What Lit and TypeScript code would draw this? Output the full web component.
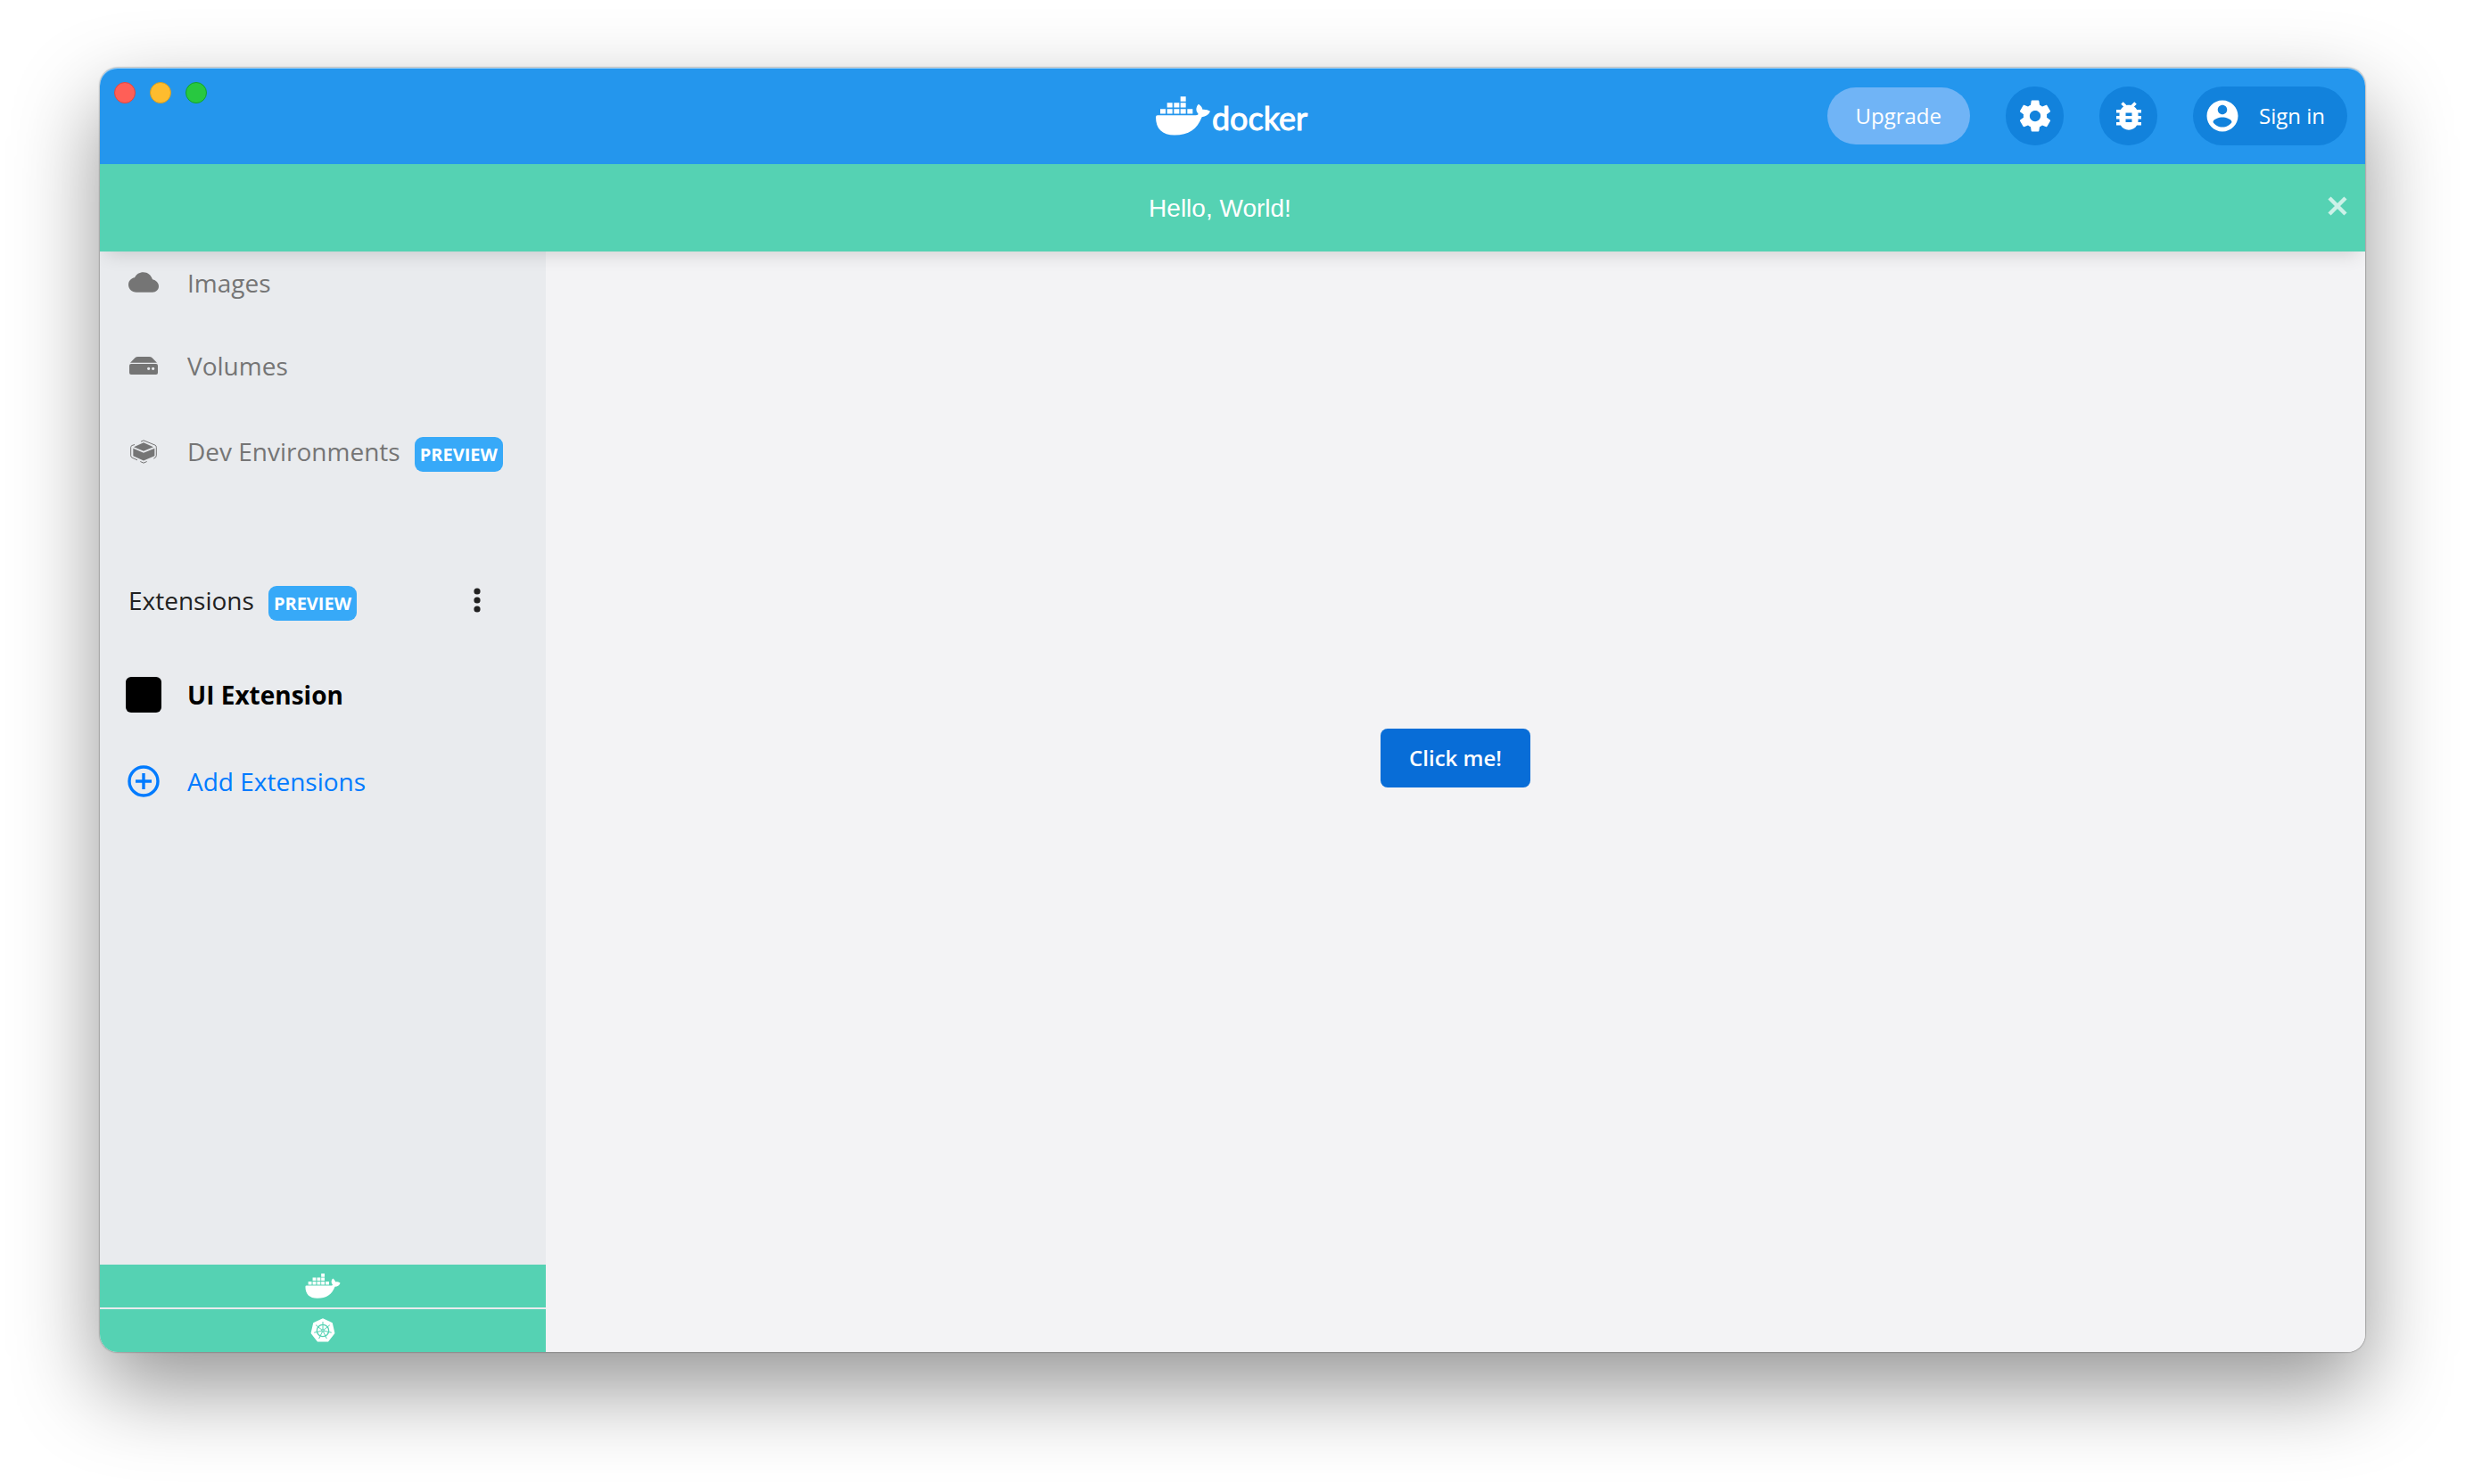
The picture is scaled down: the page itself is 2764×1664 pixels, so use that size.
import { LitElement, html, svg, css } from "lit";
import { customElement, property } from "lit/decorators.js";

const whale = svg`
  <path d="M162 52h18v17h-18zM117 73h18v16h-18zM140 73h18v16h-18zM162 73h18v16h-18zM94 94h18v16h-18zM117 94h18v16h-18zM140 94h18v16h-18zM162 94h18v16h-18zM185 94h18v16h-18z"/>
  <path d="M79 121Q79 115 85 115H213C221 115 224 112 220 108C213 100 214 86 223 78C231 84 236 90 236 96C244 95 255 97 262 102C257 114 247 120 234 121C218 162 190 182 142 182C100 182 79 160 79 121Z"/>`;

const point = (radius: number, turn: number) => {
  const angle = (turn / 7) * Math.PI * 2 - Math.PI / 2;
  return `${(radius * Math.cos(angle)).toFixed(2)} ${(radius * Math.sin(angle)).toFixed(2)}`;
};
const sevenths = [0, 1, 2, 3, 4, 5, 6];
const heptagon = "M" + sevenths.map((n) => point(37, n)).join("L") + "Z";
const spokes = sevenths.map((n) => `M0 0L${point(30, n)}`).join("");

const icons = {
  whale: { box: "79 52 183 131", art: whale },
  helm: {
    box: "-42 -42 84 84",
    art: svg`
      <path d=${heptagon} stroke="currentColor" stroke-width="8" stroke-linejoin="round"/>
      <g fill="none" stroke="var(--green)">
        <circle r="20" stroke-width="4"/>
        <path d=${spokes} stroke-width="3"/>
      </g>
      <circle r="5" fill="var(--green)"/>
      <circle r="2"/>`,
  },
  gear: {
    box: "0 0 24 24",
    art: svg`<path d="M19.43 12.98c.04-.32.07-.64.07-.98s-.03-.66-.07-.98l2.11-1.65c.19-.15.24-.42.12-.64l-2-3.46c-.12-.22-.39-.3-.61-.22l-2.49 1c-.52-.4-1.08-.73-1.69-.98l-.38-2.65C14.46 2.18 14.25 2 14 2h-4c-.25 0-.46.18-.49.42l-.38 2.65c-.61.25-1.17.59-1.69.98l-2.49-1c-.23-.09-.49 0-.61.22l-2 3.46c-.13.22-.07.49.12.64l2.11 1.65c-.04.32-.07.65-.07.98s.03.66.07.98l-2.11 1.65c-.19.15-.24.42-.12.64l2 3.46c.12.22.39.3.61.22l2.49-1c.52.4 1.08.73 1.69.98l.38 2.65c.03.24.24.42.49.42h4c.25 0 .46-.18.49-.42l.38-2.65c.61-.25 1.17-.59 1.69-.98l2.49 1c.23.09.49 0 .61-.22l2-3.46c.12-.22.07-.49-.12-.64l-2.11-1.65zM12 15.5c-1.93 0-3.5-1.57-3.5-3.5s1.57-3.5 3.5-3.5 3.5 1.57 3.5 3.5-1.57 3.5-3.5 3.5z"/>`,
  },
  bug: {
    box: "0 0 24 24",
    art: svg`<path d="M20 8h-2.81c-.45-.78-1.07-1.45-1.82-1.96L17 4.41 15.59 3l-2.17 2.17C12.96 5.06 12.49 5 12 5s-.96.06-1.41.17L8.41 3 7 4.41l1.62 1.63C7.88 6.55 7.26 7.22 6.81 8H4v2h2.09c-.05.33-.09.66-.09 1v1H4v2h2v1c0 .34.04.67.09 1H4v2h2.81c1.04 1.79 2.97 3 5.19 3s4.15-1.21 5.19-3H20v-2h-2.09c.05-.33.09-.66.09-1v-1h2v-2h-2v-1c0-.34-.04-.67-.09-1H20V8zm-6 8h-4v-2h4v2zm0-4h-4v-2h4v2z"/>`,
  },
  account: {
    box: "0 0 24 24",
    art: svg`<path d="M12 2C6.48 2 2 6.48 2 12s4.48 10 10 10 10-4.48 10-10S17.52 2 12 2zm0 3c1.66 0 3 1.34 3 3s-1.34 3-3 3-3-1.34-3-3 1.34-3 3-3zm0 14.2c-2.5 0-4.71-1.28-6-3.22.03-1.99 4-3.08 6-3.08 1.99 0 5.97 1.09 6 3.08-1.29 1.94-3.5 3.22-6 3.22z"/>`,
  },
  close: {
    box: "0 0 22 22",
    art: svg`<path d="M2 2L20 20M20 2L2 20" fill="none" stroke="currentColor" stroke-width="4.5"/>`,
  },
  cloud: {
    box: "102 106 102 69",
    art: svg`<path d="M129 174C113 174 102 163 102 149C102 136 111 127 123 125C128 114 139 107 152 107C167 107 178 116 183 131C195 134 204 143 204 154C204 166 195 174 183 174Z"/>`,
  },
  drive: {
    box: "105 390 96 60",
    art: svg`
      <path d="M108 410L124 394Q128 390 134 390H172Q178 390 182 394L198 410Z"/>
      <path fill-rule="evenodd" d="M111 414H195Q201 414 201 420V444Q201 450 195 450H111Q105 450 105 444V420Q105 414 111 414ZM165 430a5 5 0 1 0 10 0a5 5 0 1 0-10 0ZM180 430a5 5 0 1 0 10 0a5 5 0 1 0-10 0Z"/>`,
  },
  cube: {
    box: "108 668 90 80",
    art: svg`
      <path d="M120 692L153 677L186 692L153 706Z"/>
      <path d="M118 697L153 712L190 697V722L153 738L118 722Z"/>
      <path fill="none" stroke="currentColor" stroke-width="3" d="M123 684L114 687Q110 689 110 693V721Q110 726 114 728L132 736M142 741L153 746L164 741M144 674L153 670L192 686Q196 688 196 693V721Q196 728 187 731"/>`,
  },
  plus: {
    box: "0 0 36 36",
    art: svg`
      <g fill="none" stroke="currentColor">
        <circle cx="18" cy="18" r="16" stroke-width="3.4"/>
        <path d="M18 9V27M9 18H27" stroke-width="3.4"/>
      </g>`,
  },
  dots: {
    box: "0 0 8 28",
    art: svg`<circle cx="4" cy="4" r="3.6"/><circle cx="4" cy="14" r="3.6"/><circle cx="4" cy="24" r="3.6"/>`,
  },
};

@customElement("ui-icon")
class UiIcon extends LitElement {
  @property() name: keyof typeof icons = "whale";

  static styles = css`
    :host {
      display: block;
      flex: none;
    }
    svg {
      display: block;
      width: 100%;
      height: 100%;
      fill: currentColor;
    }
  `;

  render() {
    const icon = icons[this.name];
    return html`<svg viewBox=${icon.box} aria-hidden="true">${icon.art}</svg>`;
  }
}

const places = [
  { icon: "cloud", size: "cloud", label: "Images", preview: false },
  { icon: "drive", size: "drive", label: "Volumes", preview: false },
  { icon: "cube", size: "cube", label: "Dev Environments", preview: true },
];

@customElement("app-root")
class AppRoot extends LitElement {
  static styles = css`
    :host {
      --green: #55d2b3;
      --blue: #2496ed;
      display: flex;
      box-sizing: border-box;
      min-height: 100vh;
      padding: 76px 112px 148px;
      background: #fff;
      font-family: "Open Sans", sans-serif;
      font-size: 28px;
      line-height: 38px;
    }
    * {
      box-sizing: border-box;
    }
    button {
      display: flex;
      align-items: center;
      justify-content: center;
      padding: 0;
      border: 0;
      background: none;
      color: inherit;
      font: inherit;
      cursor: pointer;
    }
    a {
      color: inherit;
      text-decoration: none;
    }
    ul {
      margin: 0;
      padding: 0;
      list-style: none;
    }
    .window {
      flex: 1;
      display: flex;
      flex-direction: column;
      border-radius: 20px;
      box-shadow: 0 0 2px rgba(0, 0, 0, 0.6), 0 40px 96px rgba(0, 0, 0, 0.42);
    }
    .header {
      display: grid;
      grid-template-columns: 1fr auto 1fr;
      align-items: center;
      height: 108px;
      padding: 0 20px 0 16px;
      border-radius: 20px 20px 0 0;
      background: var(--blue);
      box-shadow: inset 0 1px 0 rgba(255, 255, 255, 0.5);
      color: #fff;
    }
    .lights {
      align-self: start;
      display: flex;
      gap: 16px;
      padding-top: 16px;
    }
    .light {
      width: 24px;
      height: 24px;
      border: 1px solid;
      border-radius: 50%;
    }
    .red {
      border-color: #e2463f;
      background: #ff5f57;
    }
    .amber {
      border-color: #d39e21;
      background: #febc2e;
    }
    .lime {
      border-color: #12a22c;
      background: #28c840;
    }
    .logo {
      display: flex;
      align-items: center;
      gap: 2px;
      padding-left: 2px;
    }
    .logo-whale {
      width: 61px;
      height: 44px;
    }
    .wordmark {
      padding-top: 4px;
      font-family: Lato, sans-serif;
      font-size: 36px;
      -webkit-text-stroke: 1px currentColor;
    }
    .actions {
      display: flex;
      justify-content: flex-end;
      align-items: center;
      gap: 40px;
      font-size: 24px;
    }
    .upgrade {
      height: 64px;
      padding: 0 32px;
      border-radius: 32px;
      background: #70b4f6;
    }
    .round {
      width: 65px;
      height: 66px;
      border-radius: 33px;
      background: #1282dc;
    }
    .signin {
      gap: 20px;
      height: 66px;
      padding: 0 25px 0 12px;
      border-radius: 33px;
      background: #1282dc;
    }
    .tool {
      width: 42px;
      height: 42px;
    }
    .body {
      position: relative;
      flex: 1;
      display: flex;
      border-radius: 0 0 20px 20px;
      overflow: hidden;
    }
    .banner {
      position: absolute;
      inset: 0 0 auto;
      display: flex;
      align-items: center;
      height: 98px;
      padding: 0 20px 0 14px;
      background: var(--green);
      box-shadow: 0 10px 20px -8px rgba(0, 0, 0, 0.16);
      color: #fff;
      font-family: "Liberation Sans", sans-serif;
    }
    .message {
      flex: 1;
      margin: 0;
      padding-top: 2px;
      text-align: center;
    }
    .close {
      width: 22px;
      height: 22px;
      margin-bottom: 4px;
      opacity: 0.7;
    }
    .close-icon {
      width: 22px;
      height: 22px;
    }
    .sidebar {
      flex: none;
      display: flex;
      flex-direction: column;
      width: 500px;
      padding-top: 86px;
      background: #e9ebee;
      color: #757575;
    }
    .item {
      display: flex;
      align-items: center;
      gap: 29px;
      height: 93px;
      padding-left: 29px;
    }
    .item.tall {
      height: 100px;
    }
    .item.extension {
      height: 97px;
    }
    .slot {
      flex: none;
      display: flex;
      justify-content: center;
      width: 40px;
    }
    .cloud {
      width: 34px;
      height: 23px;
    }
    .drive {
      width: 32px;
      height: 20px;
    }
    .cube {
      width: 30px;
      height: 27px;
    }
    .plus {
      width: 36px;
      height: 36px;
    }
    .square {
      width: 40px;
      height: 40px;
      border-radius: 6px;
      background: #000;
    }
    .tagged {
      display: flex;
      align-items: baseline;
      gap: 16px;
    }
    .badge {
      margin: -4px 0;
      padding: 0 6px;
      border-radius: 9px;
      background: #37a9f8;
      color: #fff;
      font-size: 20px;
      font-weight: 700;
      line-height: 39px;
    }
    .section {
      display: flex;
      align-items: center;
      justify-content: space-between;
      height: 60px;
      margin: 87px 0 27px;
      padding: 0 57px 0 32px;
      color: #212121;
    }
    .heading {
      margin: 0;
      font: inherit;
    }
    .more {
      width: 40px;
      height: 40px;
    }
    .dots {
      width: 8px;
      height: 28px;
    }
    .active {
      color: #000;
      font-weight: 700;
    }
    .add {
      color: #007bff;
    }
    .status {
      display: grid;
      gap: 2px;
      margin-top: auto;
      color: #fff;
    }
    .engine {
      width: 100%;
      height: 48px;
      background: var(--green);
    }
    .engine-whale {
      width: 40px;
      height: 28px;
    }
    .helm {
      width: 28px;
      height: 28px;
    }
    .content {
      flex: 1;
      display: flex;
      align-items: center;
      justify-content: center;
      background: #f3f3f5;
    }
    .primary {
      height: 66px;
      padding: 0 32px;
      border-radius: 8px;
      background: #086dd7;
      color: #fff;
      font-size: 24px;
      font-weight: 600;
    }
  `;

  render() {
    return html`
      <div class="window">
        <header class="header">
          <div class="lights">
            <button class="light red" aria-label="Close window"></button>
            <button class="light amber" aria-label="Minimize window"></button>
            <button class="light lime" aria-label="Zoom window"></button>
          </div>
          <div class="logo">
            <ui-icon class="logo-whale" name="whale"></ui-icon>
            <span class="wordmark">docker</span>
          </div>
          <div class="actions">
            <button class="upgrade">Upgrade</button>
            <button class="round" aria-label="Settings"><ui-icon class="tool" name="gear"></ui-icon></button>
            <button class="round" aria-label="Troubleshoot"><ui-icon class="tool" name="bug"></ui-icon></button>
            <button class="signin"><ui-icon class="tool" name="account"></ui-icon>Sign in</button>
          </div>
        </header>
        <div class="body">
          <nav class="sidebar">
            <ul>
              ${places.map(
                (place) => html`
                  <li>
                    <a class="item ${place.preview ? "tall" : ""}" href="#">
                      <span class="slot"><ui-icon class=${place.size} name=${place.icon}></ui-icon></span>
                      <span class="tagged">
                        <span>${place.label}</span>
                        ${place.preview ? html`<span class="badge">PREVIEW</span>` : ""}
                      </span>
                    </a>
                  </li>
                `
              )}
            </ul>
            <div class="section">
              <div class="tagged">
                <h2 class="heading">Extensions</h2>
                <span class="badge">PREVIEW</span>
              </div>
              <button class="more" aria-label="Extension options"><ui-icon class="dots" name="dots"></ui-icon></button>
            </div>
            <ul>
              <li>
                <a class="item extension active" href="#"><span class="square"></span>UI Extension</a>
              </li>
              <li>
                <a class="item extension add" href="#">
                  <span class="slot"><ui-icon class="plus" name="plus"></ui-icon></span>Add Extensions
                </a>
              </li>
            </ul>
            <div class="status">
              <button class="engine" aria-label="Docker engine"><ui-icon class="engine-whale" name="whale"></ui-icon></button>
              <button class="engine" aria-label="Kubernetes"><ui-icon class="helm" name="helm"></ui-icon></button>
            </div>
          </nav>
          <main class="content">
            <button class="primary">Click me!</button>
          </main>
          <div class="banner" role="status">
            <p class="message">Hello, World!</p>
            <button class="close" aria-label="Dismiss"><ui-icon class="close-icon" name="close"></ui-icon></button>
          </div>
        </div>
      </div>
    `;
  }
}
